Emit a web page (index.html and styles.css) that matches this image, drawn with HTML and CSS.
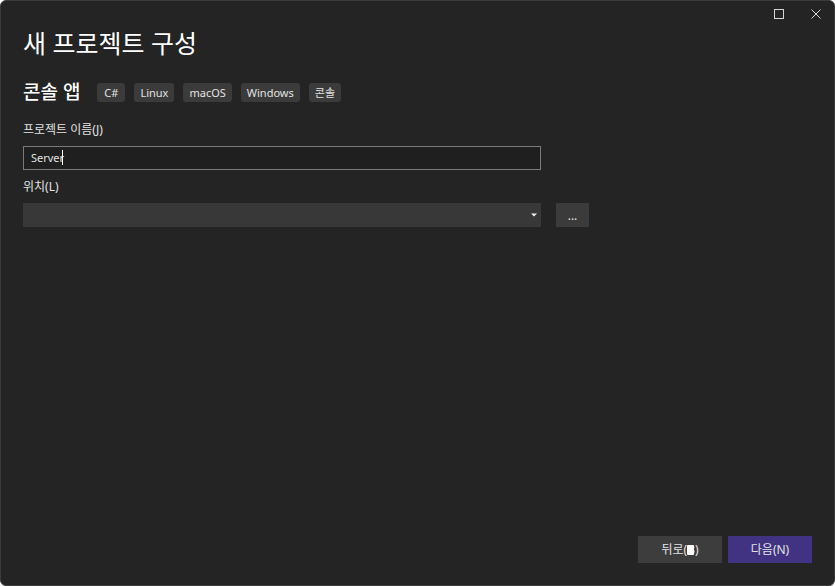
FILE: index.html
```html
<!DOCTYPE html>
<html lang="ko">
<head>
<meta charset="utf-8">
<meta name="viewport" content="width=device-width, initial-scale=1">
<title>새 프로젝트 구성</title>
<link rel="stylesheet" href="styles.css">
</head>
<body>
<div class="window">
  <header class="titlebar">
    <button class="caption" type="button" aria-label="최대화">
      <svg width="12" height="12" viewBox="0 0 12 12"><rect x="1.5" y="1.5" width="9" height="9"/></svg>
    </button>
    <button class="caption" type="button" aria-label="닫기">
      <svg width="12" height="12" viewBox="0 0 12 12"><path d="M1.5 1.5l9 9M10.5 1.5l-9 9"/></svg>
    </button>
  </header>
  <main class="content">
    <h1 class="title">새 프로젝트 구성</h1>
    <div class="template">
      <h2 class="template-name">콘솔 앱</h2>
      <ul class="tags">
        <li class="tag">C#</li>
        <li class="tag">Linux</li>
        <li class="tag">macOS</li>
        <li class="tag">Windows</li>
        <li class="tag">콘솔</li>
      </ul>
    </div>
    <form class="form" id="project">
      <label class="label" for="name">프로젝트 이름(J)</label>
      <div class="field">
        <input class="textbox" id="name" type="text" value="Server">
        <span class="caret"></span>
      </div>
      <label class="label" for="location">위치(L)</label>
      <div class="field">
        <select class="combo" id="location"><option></option></select>
        <svg class="arrow" width="6" height="4" viewBox="0 0 6 4"><path d="M0 0.5h6L3 3.5z"/></svg>
      </div>
      <button class="browse" type="button">...</button>
    </form>
  </main>
  <footer class="actions">
    <button class="button" type="button">뒤로(<span class="key">B</span>)</button>
    <button class="button primary" type="submit" form="project">다음(N)</button>
  </footer>
</div>
</body>
</html>
```

FILE: styles.css
```css
* {
  box-sizing: border-box;
}

body {
  margin: 0;
  background: #fff;
  color: #e2e2e2;
  font: 12px/18px "Noto Sans", "Noto Sans CJK KR", sans-serif;
}

button,
input,
select {
  margin: 0;
  border: 0;
  border-radius: 0;
  color: inherit;
  font: inherit;
}

.window {
  display: flex;
  flex-direction: column;
  min-height: 100vh;
  border: 1px solid #3b3b3b;
  border-radius: 6px;
  background: #242424;
}

.titlebar {
  display: flex;
  justify-content: flex-end;
}

.caption {
  display: grid;
  place-items: center;
  width: 37px;
  height: 26px;
  padding: 0;
  background: transparent;
}

.caption svg {
  fill: none;
  stroke: #d6d6d6;
}

.content {
  flex: 1;
  padding: 0 22px;
}

.title {
  margin: 0;
  color: #fff;
  font-size: 25px;
  font-weight: 400;
  line-height: 32px;
}

.template {
  display: flex;
  align-items: center;
  gap: 17px;
  margin-top: 20px;
}

.template-name {
  margin: 0;
  color: #fff;
  font-size: 19px;
  font-weight: 500;
  line-height: 26px;
}

.tags {
  display: flex;
  gap: 9px;
  margin: 0;
  padding: 0;
  list-style: none;
}

.tag {
  min-width: 28px;
  padding: 1px 6px 0;
  border-radius: 3px;
  background: #3b3b3b;
  font-size: 11px;
  line-height: 18px;
  text-align: center;
}

.form {
  display: grid;
  grid-template-columns: minmax(0, 518fr) 33px minmax(0, 208fr);
  column-gap: 15px;
  margin-top: 16px;
}

.label {
  grid-column: 1 / -1;
  line-height: 18px;
}

.field {
  position: relative;
  grid-column: 1;
  height: 24px;
  margin: 7px 0 8px;
}

.textbox,
.combo {
  display: block;
  width: 100%;
  height: 100%;
  padding: 0 7px;
  outline: 0;
}

.textbox {
  padding-bottom: 2px;
  border: 1px solid #7a7a7a;
  background: #1f1f1f;
  font-size: 11px;
}

.caret {
  position: absolute;
  top: 4px;
  left: 39px;
  width: 1px;
  height: 15px;
  background: #fff;
}

.combo {
  appearance: none;
  background: #383838;
}

.arrow {
  position: absolute;
  top: 10px;
  right: 4px;
  fill: #f0f0f0;
}

.browse {
  height: 24px;
  margin-top: 7px;
  padding: 2px 0 0;
  background: #3b3b3b;
}

.actions {
  display: flex;
  justify-content: flex-end;
  gap: 6px;
  padding: 22px;
}

.button {
  width: 84px;
  height: 27px;
  padding: 0;
  background: #3d3d3d;
}

.primary {
  background: #413382;
}

.key {
  position: relative;
}

.key::after {
  content: "";
  position: absolute;
  top: 4px;
  left: 0;
  width: 7px;
  height: 10px;
  border-radius: 1px;
  background: #fff;
}
```
